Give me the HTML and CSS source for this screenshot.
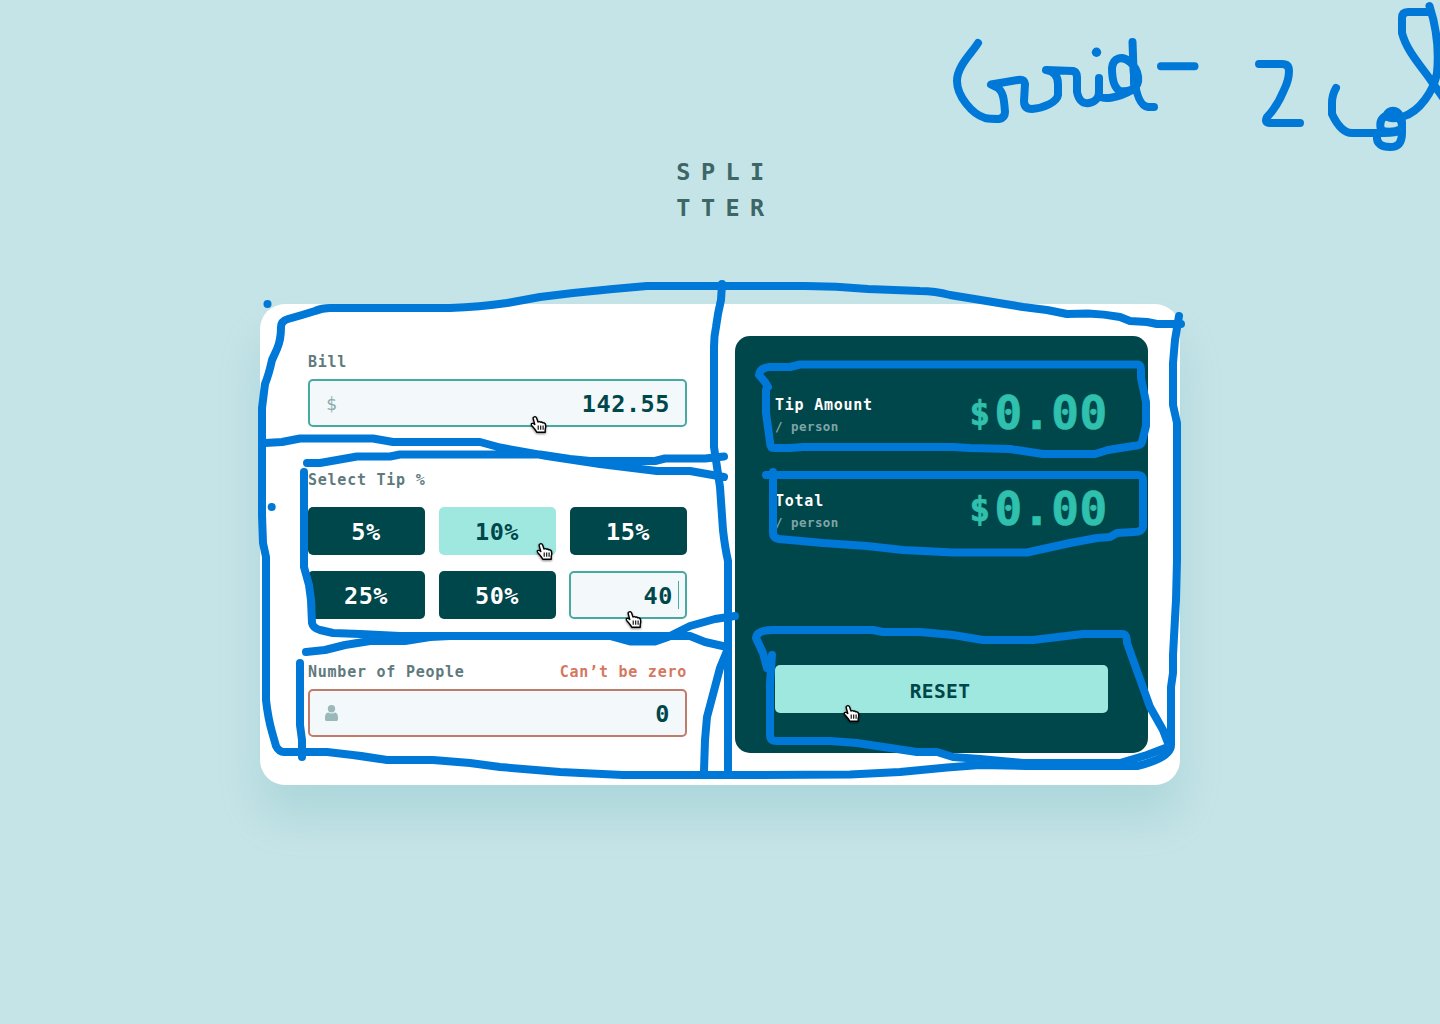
FILE: index.html
```html
<!DOCTYPE html>
<html lang="en">
<head>
<meta charset="utf-8">
<title>Splitter</title>
<link rel="stylesheet" href="styles.css">
</head>
<body>
<svg class="defs" width="0" height="0" aria-hidden="true">
  <symbol id="hand" viewBox="0 0 18 20">
    <path d="M4.200 1.800C5.300 1.300 6.200 1.900 6.600 3L8 7C8.700 6.400 9.900 6.500 10.400 7.200C11.300 6.800 12.200 7.100 12.700 7.900C14 7.500 15.200 8.200 15.500 9.500C16 11.500 15.700 13 15.200 14.500V17.300H6.800C6 15.400 4.500 14 3.300 12.400C2.300 11.100 .8 10 1.300 8.900C1.900 7.900 3.400 8.300 4.800 9.600L3.200 3.800C2.900 2.900 3.400 2.100 4.200 1.800Z" fill="#fff" stroke="#000" stroke-width="1.400" stroke-linejoin="round"/>
    <path d="M8.200 10.500v4.300M10.700 10.500v4.300M13.100 10.500v4.300" fill="none" stroke="#000" stroke-width="1.100"/>
  </symbol>
</svg>
<main class="page">
  <h1 class="logo"><span>SPLI</span><span>TTER</span></h1>
  <section class="card">
    <div class="form">
      <div class="field">
        <div class="labels"><span>Bill</span></div>
        <div class="input"><span class="dollar">$</span><span class="value">142.55</span>
          <svg class="cursor cursor-bill"><use href="#hand"/></svg></div>
      </div>
      <div class="field tips-field">
        <div class="labels"><span>Select Tip %</span></div>
        <div class="tips">
          <div class="tip">5%</div>
          <div class="tip active">10%<svg class="cursor cursor-tip"><use href="#hand"/></svg></div>
          <div class="tip">15%</div>
          <div class="tip">25%</div>
          <div class="tip">50%</div>
          <div class="input custom"><span class="value">40</span><span class="caret"></span>
            <svg class="cursor cursor-custom"><use href="#hand"/></svg></div>
        </div>
      </div>
      <div class="field">
        <div class="labels"><span>Number of People</span><span class="error">Can’t be zero</span></div>
        <div class="input invalid">
          <svg class="person" width="13" height="16" viewBox="0 0 13 16"><circle cx="6.500" cy="3.700" r="3.700"/><path d="M3.100 7.500c2 1.400 4.800 1.400 6.800 0C12 7.900 13 9.700 13 12v2.200c0 1.100-.7 1.800-1.800 1.800H1.800C.7 16 0 15.300 0 14.200V12c0-2.300 1-4.100 3.100-4.500z"/></svg>
          <span class="value">0</span></div>
      </div>
    </div>
    <div class="panel">
      <div class="result">
        <div><div class="name">Tip Amount</div><div class="per">/ person</div></div>
        <div class="amount"><span class="sign">$</span>0.00</div>
      </div>
      <div class="result">
        <div><div class="name">Total</div><div class="per">/ person</div></div>
        <div class="amount"><span class="sign">$</span>0.00</div>
      </div>
      <div class="reset">RESET<svg class="cursor cursor-reset"><use href="#hand"/></svg></div>
    </div>
  </section>
</main>

<svg class="ink" viewBox="0 0 1440 1024">
  <!-- handwritten note -->
  <path d="M978 43C972 53 957 66 957 81C957 96 972 114 985 118Q990 119 999 119Q1005 118 1005 112C1004 98 1003 92 998 88L991 84.500L1018 80Q1024 79 1025 84L1024 101Q1024 109 1032 109C1044 108 1057 102 1058 95V84C1058 76 1054 71 1046 70L1073 71Q1077 72 1077 77L1077 92C1079 101 1083 104 1089 103C1095 102 1099 98 1099 92V78"/>
  <path d="M1099 96C1104 100 1118 98 1132 90C1142 84 1139 70 1130 62C1122 55 1113 58 1112 68C1112 80 1114 88 1120 91C1128 92 1134 90 1136 84M1132.500 42L1133.500 70C1135 90 1139 106 1148 107H1154M1134 68V84"/>
  <circle cx="1096.500" cy="52.300" r="4.700"/>
  <path d="M1161 66.300H1194.500M1259 64H1282Q1289 64 1289 71Q1289 80 1284 90Q1277 107 1267 117Q1264 123 1270 123H1300"/>
  <path d="M1336 88Q1332 95 1332 103V114Q1341 133 1352 133H1377C1397 133 1402 132 1402 125C1401 118 1396 115 1390 115C1381 116 1379 122 1381 130C1385 132 1393 133 1401 129M1377 136C1376 144 1382 147 1390 147C1400 147 1402 140 1402 133V122"/>
  <path class="blot" d="M1386 116C1389 109 1397 109 1400 116C1397 119 1390 119 1386 116Z"/>
  <path d="M1402 117C1420 112 1434 90 1437 73C1439 52 1438 32 1429.500 6M1430 12H1408Q1402 12 1402 18V33C1407 52 1422 67 1432 82L1444 99"/>

  <!-- outer frame -->
  <circle cx="267.500" cy="304" r="4"/><circle cx="271.700" cy="507" r="4"/>
  <path d="M1181 324H1157L1147 322L1130 321L1120 317Q1104 314 1088 313.500L1067 314L1047 310L1023 307L950 295Q935 291 920 291L868 289Q836 286 805 286H647L613 289L573 293L540 297L507 303Q480 307 450 308H330Q322 308 315 311L302 315L288 319Q281 321 281 327Q281 340 277 349L272 360Q269 374 265 384L262 408V515L263 543L266 557V700Q268 718 272 732L276 746Q279 752 284 752H327Q357 755 387 760H433L470 763L500 767L560 772L623 775H747L850 774.500L900 772L947 767.500L980 765L1027 766H1137Q1171 758 1171 745V687L1173 673V655L1176 600L1177 560V423L1173 405V363L1175 340L1179 316"/>
  <path d="M722 284L721 300Q718 312 716 327Q714 336 714 347V447L720 487L723 530Q725 548 728 561V770M727 651L720 668L707 717L705 740L704 771"/>

  <!-- form sections -->
  <path d="M265 443L282 442L300 438.500H373L393 442H480L500 447.500L547 456L600 464L657 471H690L724 477M307 463L320 463L357 456.500H390L400 454.500H540L570 459L590 461H655L665 458.500H705L724 456.500"/>
  <path d="M304 472V567L309 585L311 600L312 623Q313 628 320 630L333 633L360 634L400 636H690L705 642L727 647M306 652L325 650L345 645L370 641H405L430 637L450 636M610 636L630 641.500H655L668 637L690 626L715 619L735 616M300 663V725L302 740V757"/>

  <!-- results -->
  <path d="M768 387L765 382L759 375Q760 368 769 367L790 367L800 364.500H1138Q1141 365 1141 370V378L1146 402V426L1142 442Q1141 446 1133 446L1108 450L1095 454H1043L1010 449L970 448L953 447H803L790 448H774Q770 448 770 442L766 413V390"/>
  <path d="M766 475H1138Q1143 475 1143 481V527Q1142 532 1134 532L1117 533L1110 537L1097 538L1070 543L1027 552.500H953L903 550L867 546L823 543L779 539Q773 538 773 533V472"/>
  <path d="M767 668L763 653L756 638Q757 630 773 630H873L883 632H920L953 635L983 640H1033L1083 634H1122Q1127 634 1127 643L1150 707L1163 730L1170 748M772 655L770 683V735Q770 741 777 741H830L857 743L917 752H937L953 757L980 759L1023 763H1120L1147 755L1168 747"/>
</svg>
</body>
</html>
```
FILE: styles.css
```css
* { box-sizing: border-box; }
body {
  margin: 0;
  background: #c5e4e7;
  font-family: "DejaVu Sans Mono", "Liberation Mono", monospace;
  font-weight: 700;
  color: #00474b;
}
.defs { position: absolute; }
.page {
  height: 1024px;
  padding-top: 154px;
  display: flex;
  flex-direction: column;
  align-items: center;
  overflow: hidden;
}
.logo {
  margin: 0 0 78px;
  padding-left: 11px;
  display: flex;
  flex-direction: column;
  font-size: 23.500px;
  line-height: 36px;
  letter-spacing: 10.450px;
  color: #3d6666;
}
.card {
  width: 920px;
  height: 481px;
  padding: 32px 32px 32px 48px;
  display: grid;
  grid-template-columns: 379px 413px;
  gap: 48px;
  background: #fff;
  border-radius: 25px;
  box-shadow: 0 32px 43px rgba(79, 166, 175, 0.2);
}
.form { padding-top: 14px; }
.labels {
  display: flex;
  justify-content: space-between;
  font-size: 15px;
  line-height: 24px;
  letter-spacing: 0.760px;
  color: #5e7a7d;
}
.error { color: #d4785f; }
.input {
  position: relative;
  height: 48px;
  margin-top: 5px;
  padding: 0 15px;
  display: flex;
  align-items: center;
  justify-content: space-between;
  background: #f3f8fb;
  border: 2px solid #47a99f;
  border-radius: 5px;
}
.invalid { border-color: #c07b6b; }
.value, .tip { font-size: 23.500px; letter-spacing: 0.550px; }
.value { padding-top: 2px; }
.dollar { font-size: 18px; font-weight: 400; color: #8bacad; margin-left: 1px; }
.person { fill: #9bb9ba; }
.tips-field { margin: 41px 0; }
.tips {
  margin-top: 15px;
  display: grid;
  grid-template-columns: repeat(3, 117px);
  gap: 16px 14px;
}
.tip {
  position: relative;
  height: 48px;
  padding: 2px 1px 0 0;
  display: flex;
  align-items: center;
  justify-content: center;
  background: #00474b;
  color: #fff;
  border-radius: 5px;
}
.active { background: #9fe8df; color: #00474b; }
.custom { margin: 0 0 0 -1px; padding: 0 6px; justify-content: flex-end; gap: 5px; }
.caret { width: 1px; height: 28px; background: #47a99f; }
.panel {
  padding: 43px 40px 40px;
  display: flex;
  flex-direction: column;
  background: #00474b;
  border-radius: 15px;
}
.result {
  height: 72px;
  margin-bottom: 24px;
  display: flex;
  justify-content: space-between;
  align-items: center;
  color: #fff;
}
.name { font-size: 15px; line-height: 24px; letter-spacing: 0.760px; }
.per { font-size: 12.500px; line-height: 20px; letter-spacing: 0.450px; color: #7fa5a6; }
.amount {
  display: flex;
  align-items: center;
  padding-bottom: 3px;
  font-size: 46px;
  line-height: 69px;
  letter-spacing: 0.700px;
  color: #2fc0ae;
  -webkit-text-stroke: 0.700px #2fc0ae;
}
.sign { width: 25px; font-size: 34px; letter-spacing: 0; }
.reset {
  position: relative;
  height: 48px;
  margin-top: auto;
  padding: 4px 3px 0 0;
  display: flex;
  align-items: center;
  justify-content: center;
  background: #9fe8df;
  border-radius: 5px;
  font-size: 19.500px;
  letter-spacing: 0.400px;
}
.cursor {
  position: absolute;
  width: 18px;
  height: 20px;
  z-index: 2;
  filter: drop-shadow(0 1px 1px rgba(0, 0, 0, 0.5));
}
.cursor-bill { left: 220px; top: 34px; }
.cursor-tip { left: 97px; top: 35px; }
.cursor-custom { left: 54px; top: 37px; }
.cursor-reset { left: 68px; top: 39px; }
.ink {
  position: absolute;
  left: 0;
  top: 0;
  width: 1440px;
  height: 1024px;
  pointer-events: none;
  fill: none;
  stroke: #0078d7;
  stroke-width: 8px;
  stroke-linecap: round;
  stroke-linejoin: round;
}
.ink circle { fill: #0078d7; stroke: none; }
.ink .blot { fill: #0078d7; }
```
